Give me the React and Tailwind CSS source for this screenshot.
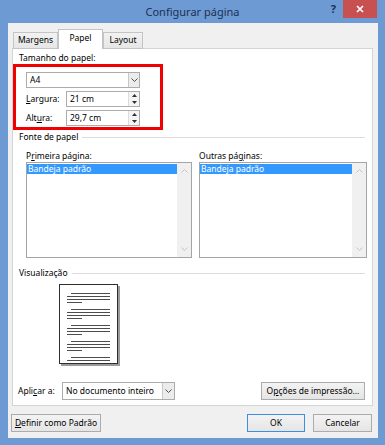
import React from 'react';

function Chevron({ up }) {
    return (
        <svg width="7" height="4" viewBox="0 0 7 4">
            <path d={up ? 'M0.5 3.5 L3.5 0.5 L6.5 3.5' : 'M0.5 0.5 L3.5 3.5 L6.5 0.5'} fill="none" stroke="currentColor" strokeWidth="1" />
        </svg>
    );
}

function Combo({ value, className }) {
    return (
        <div className={`flex h-[16px] bg-white border border-[#acacac] ${className}`}>
            <div className="flex-1 pl-[3px] leading-[14px]">{value}</div>
            <div className="w-[11px] border-l border-[#c8c8c8] bg-[#ececec] flex items-center justify-center text-[#505050]">
                <Chevron />
            </div>
        </div>
    );
}

function Spin({ value }) {
    return (
        <div className="flex w-[74px] h-[16px] bg-white border border-[#acacac]">
            <div className="flex-1 pl-[3px] leading-[14px]">{value}</div>
            <div className="w-[11px] flex flex-col bg-[#f4f4f4] border-l border-[#dcdcdc]">
                <div className="flex-1 flex items-center justify-center">
                    <svg width="5" height="3" viewBox="0 0 5 3"><path d="M0 3 L2.5 0 L5 3Z" fill="#303030" /></svg>
                </div>
                <div className="flex-1 flex items-center justify-center">
                    <svg width="5" height="3" viewBox="0 0 5 3"><path d="M0 0 L2.5 3 L5 0Z" fill="#303030" /></svg>
                </div>
            </div>
        </div>
    );
}

function ListBox({ className }) {
    return (
        <div className={`flex h-[96px] bg-white border border-[#a5a5a5] ${className}`}>
            <div className="flex-1 pt-px">
                <div className="bg-[#3399ff] text-white h-[10px] leading-[10px] pl-px">Bandeja padrão</div>
            </div>
            <div className="w-[14px] bg-[#f0f0f0] flex flex-col justify-between items-center py-[6px] text-[#c4c4c4]">
                <Chevron up />
                <Chevron />
            </div>
        </div>
    );
}

function GroupHeader({ children, className }) {
    return (
        <div className={`flex items-center h-[12px] pl-[6px] pr-[7px] ${className}`}>
            <span className="leading-[12px]">{children}</span>
            <div className="flex-1 h-px bg-[#dcdcdc] ml-[4px]" />
        </div>
    );
}

function Btn({ children, className }) {
    return (
        <div className={`h-[18px] flex items-center justify-center border bg-gradient-to-b from-[#f3f3f3] to-[#e5e5e5] ${className}`}>
            {children}
        </div>
    );
}

function PageLines() {
    return (
        <div className="flex flex-col gap-[6px]">
            <div className="flex flex-col gap-[2px]">
                <div className="h-px bg-[#4d4d4d] ml-[4px]" />
                <div className="h-px bg-[#4d4d4d]" />
                <div className="h-px bg-[#4d4d4d]" />
                <div className="h-px bg-[#4d4d4d] w-[15px]" />
            </div>
        </div>
    );
}

export default function App() {
    return (
        <div className="w-[385px] h-[445px] bg-[#6e9ad3] flex flex-col font-['Noto_Sans',sans-serif] text-[8.5px] text-black overflow-hidden">
            {/* TITLE BAR */}
            <div className="h-[23px] grid grid-cols-[1fr_auto_1fr]">
                <div />
                <div className="pt-[6px] text-[11px] leading-none text-[#1c3152]">Configurar página</div>
                <div className="flex justify-end items-start">
                    <span className="mt-[3px] mr-[7px] text-[11px] font-bold leading-none text-[#1c3152]">?</span>
                    <div className="w-[34px] h-[18px] mr-[8px] bg-[#c75050] flex items-center justify-center">
                        <svg width="8" height="8" viewBox="0 0 8 8">
                            <path d="M1 1 L7 7 M7 1 L1 7" stroke="white" strokeWidth="1.6" />
                        </svg>
                    </div>
                </div>
            </div>

            {/* CLIENT */}
            <div className="ml-[8px] mr-[7px] mb-[7px] flex-1 bg-[#f0f0f0] flex flex-col">
                {/* TABS */}
                <div className="flex items-end pl-[5px] pt-[6px] -mb-px relative z-10">
                    <div className="w-[45px] h-[17px] border border-[#c4c4c4] bg-gradient-to-b from-[#f2f2f2] to-[#e6e6e6] flex items-center justify-center">Margens</div>
                    <div className="w-[45px] h-[20px] border border-b-0 border-[#c4c4c4] bg-white flex items-center justify-center pb-[2px]">Papel</div>
                    <div className="w-[40px] h-[17px] border border-[#c4c4c4] bg-gradient-to-b from-[#f2f2f2] to-[#e6e6e6] flex items-center justify-center">Layout</div>
                </div>

                {/* PANEL */}
                <div className="ml-[4px] mr-[5px] h-[358px] border border-[#d4d4d4] bg-white flex flex-col">
                    <div className="pl-[6px] pt-[3px] leading-[12px]">Tamanho do papel:</div>

                    {/* highlighted size box */}
                    <div className="w-[150px] h-[66px] border-[3px] border-[#f00000] pl-[10px] pt-[5px] flex flex-col gap-[3px]">
                        <Combo value="A4" className="w-[114px]" />
                        <div className="flex items-center">
                            <span className="w-[40px]"><u>L</u>argura:</span>
                            <Spin value="21 cm" />
                        </div>
                        <div className="flex items-center">
                            <span className="w-[40px]">Alt<u>u</u>ra:</span>
                            <Spin value="29,7 cm" />
                        </div>
                    </div>

                    <GroupHeader className="mt-[1px]">Fonte de papel</GroupHeader>
                    <div className="flex mt-[7px] pl-[13px] leading-[12px]">
                        <span className="w-[173px]">P<u>r</u>imeira página:</span>
                        <span>Outras pá<u>g</u>inas:</span>
                    </div>
                    <div className="flex gap-[7px] pl-[13px]">
                        <ListBox className="w-[166px]" />
                        <ListBox className="w-[168px]" />
                    </div>

                    <GroupHeader className="mt-[9px]">Visualização</GroupHeader>
                    <div className="ml-[46px] mt-[5px] w-[61px] h-[82px] flex">
                        <div className="w-[59px] h-[80px] border border-[#2e2e2e] bg-white shadow-[2px_2px_0_#9a9a9a] pt-[8px] px-[7px] overflow-hidden flex flex-col gap-[6px]">
                            <PageLines />
                            <PageLines />
                            <PageLines />
                            <PageLines />
                            <PageLines />
                        </div>
                    </div>

                    <div className="flex items-center mt-[16px] pl-[5px] pr-[7px]">
                        <span className="w-[44px]">Apli<u>c</u>ar a:</span>
                        <div className="flex h-[18px] w-[113px] bg-white border border-[#acacac]">
                            <div className="flex-1 pl-[3px] leading-[16px]">No documento inteiro</div>
                            <div className="w-[12px] border-l border-[#c8c8c8] bg-[#ececec] flex items-center justify-center text-[#505050]">
                                <Chevron />
                            </div>
                        </div>
                        <div className="flex-1" />
                        <Btn className="w-[104px] h-[17px] border-[#acacac]">O<u>p</u>ções de impressão...</Btn>
                    </div>
                </div>

                {/* BOTTOM BUTTONS */}
                <div className="flex mt-[8px] pl-[3px] pr-[6px]">
                    <Btn className="w-[90px] border-[#acacac]"><u>D</u>efinir como Padrão</Btn>
                    <div className="flex-1" />
                    <Btn className="w-[58px] border-[#3c8fe0]">OK</Btn>
                    <Btn className="w-[59px] ml-[8px] border-[#acacac]">Cancelar</Btn>
                </div>
            </div>
        </div>
    );
}
